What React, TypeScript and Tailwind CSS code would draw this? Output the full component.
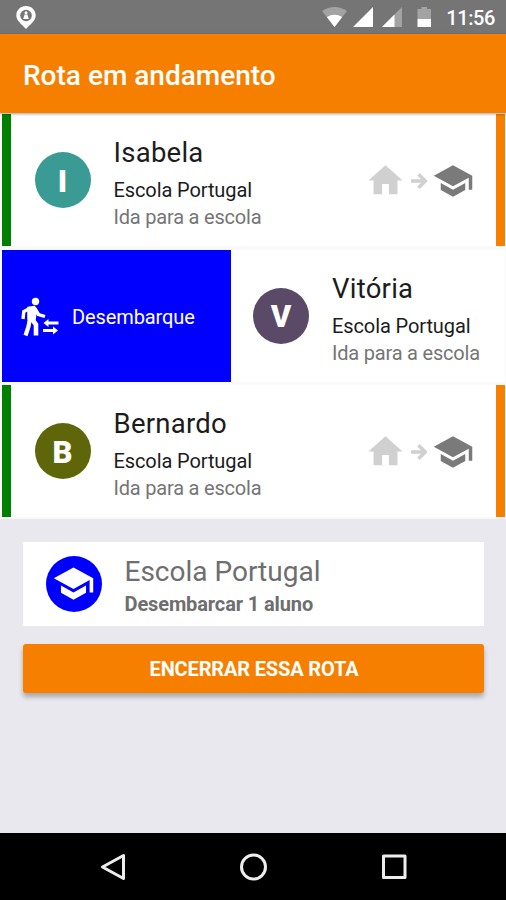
import { MdHome, MdSchool } from "react-icons/md";

type Student = {
  name: string;
  school: string;
  direction: string;
  color: string;
  swiped?: boolean;
};

const students: Student[] = [
  { name: "Isabela", school: "Escola Portugal", direction: "Ida para a escola", color: "bg-[#3a9a94]" },
  { name: "Vitória", school: "Escola Portugal", direction: "Ida para a escola", color: "bg-[#5a4a68]", swiped: true },
  { name: "Bernardo", school: "Escola Portugal", direction: "Ida para a escola", color: "bg-[#5f6609]" },
];

function StatusBar() {
  return (
    <div className="flex h-[34px] items-center justify-between bg-[#757575] pl-4 pr-[11px]">
      <svg className="h-[23px] w-5" viewBox="0 0 20 23">
        <path d="M10 0C4.500 0 .3 4.200 .3 9.500c0 5 5.200 8.600 9.700 13.500 4.500-4.900 9.700-8.500 9.700-13.500C19.700 4.200 15.500 0 10 0z" fill="#fff" />
        <circle cx="10" cy="9.500" r="5.800" fill="#757575" />
        <circle cx="10" cy="6.700" r="1.500" fill="#fff" />
        <path d="M8.600 8.500h2.800l1.400 4.500H7.200z" fill="#fff" />
      </svg>
      <div className="flex items-center">
        <svg className="h-[22px] w-[110px]" viewBox="0 0 110 22">
          <path d="M0 5Q12.500-3 25 5L12.500 21z" fill="#a3a3a3" />
          <path d="M4.800 11Q12.500 6.500 20.200 11L12.500 21z" fill="#fff" />
          <path d="M31 21L51 1V21z" fill="#fff" />
          <path d="M60 21L80 1V21z" fill="#a3a3a3" />
          <path d="M60 21L72.500 8.500V21z" fill="#fff" />
          <path d="M95.500 3h4V1h5.500v2h4v10H95.500z" fill="#a3a3a3" />
          <path d="M95.500 13H109v8H95.500z" fill="#fff" />
        </svg>
        <span className="ml-3.5 mt-px text-[20px] leading-6 font-medium tracking-[-0.400px] text-white">11:56</span>
      </div>
    </div>
  );
}

function DisembarkIcon() {
  return (
    <svg className="h-[42px] w-10" viewBox="0 0 40 42" fill="none" stroke="#fff" strokeWidth="3">
      <circle cx="15.500" cy="6.500" r="3.700" fill="#fff" stroke="none" />
      <path d="M8 12.500L14.500 11.500L16.500 15L15 24.500L8 24z" fill="#fff" strokeWidth="1.500" strokeLinejoin="round" />
      <path d="M10.500 13L3.800 16.500L3 24" strokeWidth="3.400" />
      <path d="M14.500 13L18.500 19.500L25 21.500" strokeWidth="3.400" />
      <path d="M10 23L8.500 31.500L5.500 40.500" strokeWidth="4.200" />
      <path d="M11.500 23.500L16 29.500V40.500" strokeWidth="4.600" />
      <path d="M38.500 28H27.500M23 35.500H34" strokeWidth="2.800" />
      <path d="M23.500 28L28.500 24V32zM38 35.500L33 31.500V39.500z" fill="#fff" stroke="none" />
    </svg>
  );
}

function Avatar({ student }: { student: Student }) {
  return (
    <div className={`flex size-14 shrink-0 items-center justify-center rounded-full ${student.color}`}>
      <span className="mt-[3px] text-[31px] leading-8 font-black text-white">{student.name[0]}</span>
    </div>
  );
}

function StudentText({ student }: { student: Student }) {
  return (
    <div className="mt-[7px] ml-[23px] whitespace-nowrap">
      <div className="mb-[7px] text-[27.500px] leading-[34px] tracking-[0.250px] text-[#1c1c1c]">{student.name}</div>
      <div className="text-[20px] leading-[27px] tracking-[-0.100px] text-[#1c1c1c]">{student.school}</div>
      <div className="text-[20px] leading-[27px] tracking-[-0.200px] text-[#757575]">{student.direction}</div>
    </div>
  );
}

function StudentRow({ student }: { student: Student }) {
  if (student.swiped) {
    return (
      <div className="flex h-[132px] bg-white">
        <div className="flex w-[228.500px] shrink-0 items-center bg-[#0000ff] pl-[18px] text-white">
          <DisembarkIcon />
          <span className="ml-3 mt-[3px] text-[20px] leading-6 tracking-[-0.100px]">Desembarque</span>
        </div>
        <div className="flex items-center pl-[22.500px]">
          <Avatar student={student} />
          <StudentText student={student} />
        </div>
      </div>
    );
  }

  return (
    <div className="flex h-[132px] items-center border-l-[9px] border-r-[9px] border-l-[#008000] border-r-[#f77f00] bg-white pl-[23.500px]">
      <Avatar student={student} />
      <StudentText student={student} />
      <div className="ml-auto flex items-center pt-px pr-[22.500px]">
        <MdHome size={41} className="text-[#d0d0d0]" />
        <svg className="ml-[5px] size-4" viewBox="0 0 16 16" fill="none" stroke="#d0d0d0" strokeWidth="3.500">
          <path d="M0 8H14M7.500 1.200L14.300 8L7.500 14.800" />
        </svg>
        <MdSchool size={42} className="ml-[5px] text-[#7a7a7a]" />
      </div>
    </div>
  );
}

function NavigationBar() {
  return (
    <div className="flex h-[67px] items-center justify-center gap-[112px] bg-black pl-px">
      <svg className="size-7" viewBox="0 0 28 28" fill="none" stroke="#eee" strokeWidth="3" strokeLinejoin="round">
        <path d="M2.500 14L23.500 2.500V25.500z" />
      </svg>
      <svg className="size-7" viewBox="0 0 28 28" fill="none" stroke="#eee" strokeWidth="3">
        <circle cx="13.500" cy="14" r="12" />
      </svg>
      <svg className="size-7" viewBox="0 0 28 28" fill="none" stroke="#eee" strokeWidth="3" strokeLinejoin="round">
        <rect x="3.500" y="3" width="21.500" height="21.500" />
      </svg>
    </div>
  );
}

export default function App() {
  return (
    <div className="flex h-[900px] w-[506px] flex-col overflow-hidden bg-[#e9e8ee] font-[Roboto,sans-serif]">
      <StatusBar />
      <header className="relative flex h-[79px] items-center bg-[#f77f00] pl-[23px] pt-1 shadow-[0_1px_3px_rgba(0,0,0,0.35)]">
        <h1 className="text-[28px] leading-8 font-medium whitespace-nowrap text-white">Rota em andamento</h1>
      </header>

      <main className="flex-1">
        <div className="flex flex-col gap-[3.500px] bg-[#f9f9f9] pt-px pr-px pb-0.5 pl-0.5">
          {students.map((student) => (
            <StudentRow key={student.name} student={student} />
          ))}
        </div>

        <div className="px-[22.500px] pt-[22.500px]">
          <div className="flex h-[84.500px] items-center bg-white pl-[23px]">
            <div className="flex size-14 items-center justify-center rounded-full bg-[#0000ff]">
              <MdSchool size={43} className="text-white" />
            </div>
            <div className="ml-[23px] pt-1 whitespace-nowrap text-[#6e6e6e]">
              <div className="text-[28px] leading-9">Escola Portugal</div>
              <div className="text-[20px] leading-7 font-bold tracking-[-0.120px]">Desembarcar 1 aluno</div>
            </div>
          </div>
          <button className="mt-[17.500px] h-[49.500px] w-full rounded-[3px] bg-[#f77f00] pt-0.5 pl-0.5 text-[20px] font-bold tracking-[-0.150px] text-white shadow-[0_4px_5px_rgba(0,0,0,0.28)]">
            ENCERRAR ESSA ROTA
          </button>
        </div>
      </main>

      <NavigationBar />
    </div>
  );
}
